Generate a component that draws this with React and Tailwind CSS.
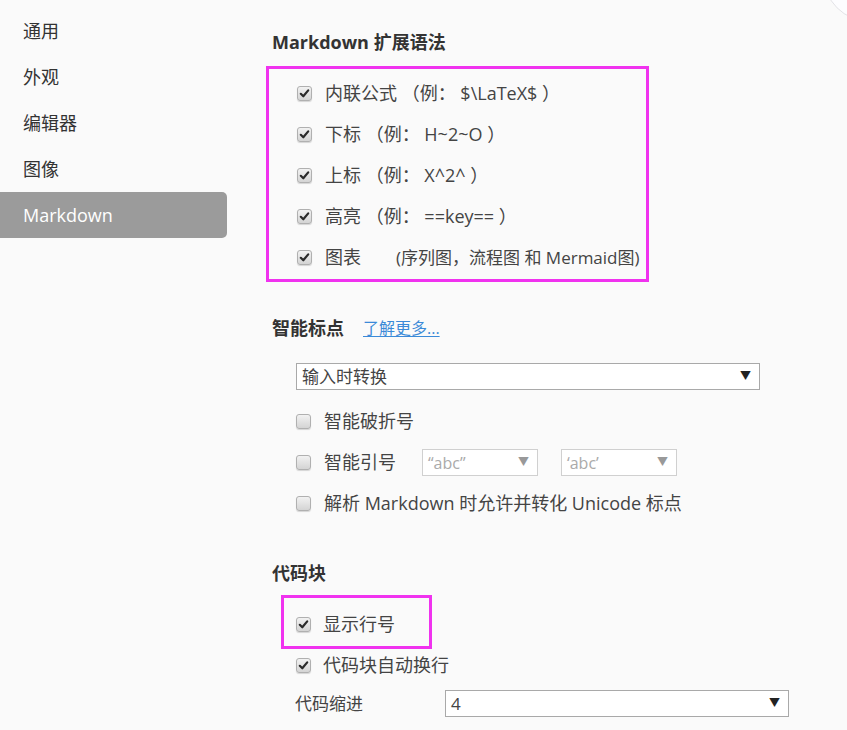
import React from "react";

const font = { fontFamily: '"Open Sans", "Noto Sans CJK SC", sans-serif' };

function Box({ checked }) {
  return (
    <span className="flex h-[15px] w-[15px] shrink-0 items-center justify-center rounded-[3px] border border-[#b0b0b0] bg-gradient-to-b from-[#f2f2f2] to-[#d4d4d4] shadow-[0_1px_1px_rgba(0,0,0,0.15)]">
      {checked && (
        <svg width="11" height="11" viewBox="0 0 11 11">
          <path d="M1.8 5.8 L4.3 8.3 L9.2 2.4" fill="none" stroke="#2a2a2a" strokeWidth="2.2" strokeLinecap="round" strokeLinejoin="round" />
        </svg>
      )}
    </span>
  );
}

function Row({ checked, children, gap = "gap-[13px]" }) {
  return (
    <div className={`flex h-[41px] items-center ${gap} pt-[2px] text-[18px] text-[#444]`}>
      <Box checked={checked} />
      <span className="whitespace-nowrap">{children}</span>
    </div>
  );
}

function Select({ value, className, muted }) {
  return (
    <div
      className={`flex h-[27px] items-center justify-between border bg-white pl-[5px] pr-[8px] ${
        muted ? "border-[#d0d0d0] text-[#aaa]" : "border-[#a9a9a9] text-[#444]"
      } ${className}`}
    >
      <span className={muted ? "text-[16px]" : "text-[17px]"}>{value}</span>
      <span className={`text-[11px] ${muted ? "text-[#999]" : "text-[#222]"}`}>▼</span>
    </div>
  );
}

export default function App() {
  const side = ["通用", "外观", "编辑器", "图像", "Markdown"];
  return (
    <div className="relative h-[730px] w-[847px] overflow-hidden bg-[#fafafa]" style={font}>
      <div className="absolute left-[823px] top-[-72px] h-[94px] w-[94px] rounded-full border border-[#e2e2e6] bg-[#fdfdff]" />
      <div className="flex">
        <div className="w-[227px] shrink-0 pt-[8px]">
          {side.map((s, i) => (
            <div
              key={s}
              className={`flex h-[46px] items-center pl-[23px] text-[18px] ${
                i === 4 ? "rounded-r-[5px] bg-[#9b9b9b] text-white" : "text-[#333]"
              }`}
            >
              {s}
            </div>
          ))}
        </div>

        <div className="ml-[45px] flex flex-col pt-[30px]">
          <div className="h-[24px] text-[18px] font-bold leading-[24px] text-[#333]">Markdown 扩展语法</div>
          <div className="-ml-[6px] mt-[12px] w-[383px] border-[3px] border-[#f032ef] pb-[2px] pl-[28px] pt-[3px]">
            <Row checked>内联公式 （例： $\LaTeX$ ）</Row>
            <Row checked>下标 （例： H~2~O ）</Row>
            <Row checked>上标 （例： X^2^ ）</Row>
            <Row checked>高亮 （例： ==key== ）</Row>
            <div className="flex h-[41px] items-center pt-[2px] text-[18px] text-[#444]">
              <Box checked />
              <span className="ml-[13px] whitespace-nowrap">图表</span>
              <span className="ml-[35px] whitespace-nowrap text-[17px]">(序列图，流程图 和 Mermaid图)</span>
            </div>
          </div>

          <div className="mt-[34px] flex h-[24px] items-center gap-[19px] leading-[24px]">
            <span className="text-[18px] font-bold text-[#333]">智能标点</span>
            <span className="text-[16px] text-[#3b8ad8] underline underline-offset-2">了解更多...</span>
          </div>
          <div className="ml-[24px] mt-[23px] flex flex-col">
            <Select value="输入时转换" className="w-[464px]" />
            <div className="mt-[10px]">
              <Row>智能破折号</Row>
              <div className="flex h-[41px] items-center pt-[2px] text-[18px] text-[#444]">
                <Box />
                <span className="ml-[13px] whitespace-nowrap">智能引号</span>
                <Select value="“abc”" muted className="ml-[26px] w-[116px]" />
                <Select value="‘abc’" muted className="ml-[23px] w-[116px]" />
              </div>
              <Row>解析 Markdown 时允许并转化 Unicode 标点</Row>
            </div>
          </div>

          <div className="mt-[38px] h-[24px] text-[18px] font-bold leading-[24px] text-[#333]">代码块</div>
          <div className="ml-[24px] mt-[18px] flex flex-col">
            <div className="relative">
              <div className="pointer-events-none absolute left-[-15px] top-[-8px] h-[54px] w-[151px] border-[3px] border-[#f032ef]" />
              <Row checked gap="gap-[12px]">显示行号</Row>
            </div>
            <Row checked gap="gap-[12px]">代码块自动换行</Row>
            <div className="flex h-[37px] items-center">
              <span className="-ml-[1px] w-[150px] text-[17px] text-[#444]">代码缩进</span>
              <Select value="4" className="w-[344px]" />
            </div>
          </div>
        </div>
      </div>
    </div>
  );
}
